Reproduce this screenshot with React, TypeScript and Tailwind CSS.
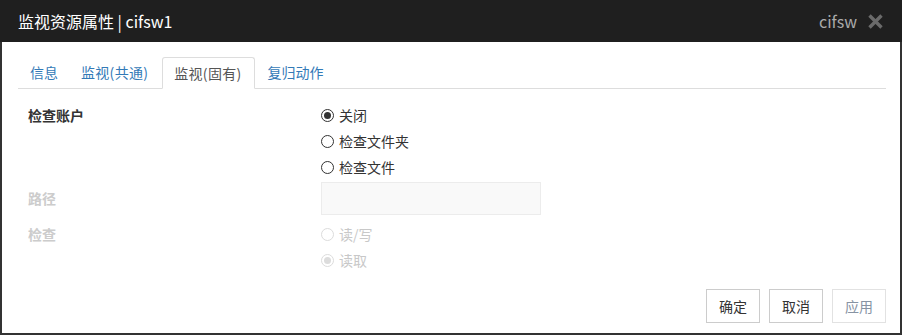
import React from "react";

function Radio({ checked, disabled, label }: { checked?: boolean; disabled?: boolean; label: string }) {
  const border = disabled ? "border-[#dcdcdc]" : "border-[#333]";
  const dot = disabled ? "bg-[#dcdcdc]" : "bg-[#333]";
  return (
    <div className="flex items-center h-[26px]">
      <span className={`w-[13px] h-[13px] rounded-full border ${border} flex items-center justify-center bg-white`}>
        {checked && <span className={`w-[7px] h-[7px] rounded-full ${dot}`} />}
      </span>
      <span className={`ml-[5px] text-[14px] ${disabled ? "text-[#c8c8c8]" : "text-[#333]"}`}>{label}</span>
    </div>
  );
}

export default function App() {
  return (
    <div
      className="w-[904px] h-[336px] bg-white"
      style={{ fontFamily: '"Noto Sans CJK SC", "Microsoft YaHei", sans-serif' }}
    >
      <div className="w-[902px] h-[335px] flex flex-col border-x-2 border-b-2 border-[#333]">
        <div className="h-[42px] -mx-[2px] bg-[#1f1f1f] flex items-center pl-[18px] pr-[19px]">
          <div className="text-white text-[16px] leading-none">监视资源属性 | cifsw1</div>
          <div className="ml-auto flex items-center">
            <span className="text-[#aaaaaa] text-[16px] leading-none">cifsw</span>
            <svg className="ml-[11px]" width="15" height="15" viewBox="0 0 15 15">
              <path d="M1.5 1.5 L13.5 13.5 M13.5 1.5 L1.5 13.5" stroke="#6a6a6a" strokeWidth="3.4" strokeLinecap="butt" />
            </svg>
          </div>
        </div>
        <div className="pl-[16px] pr-[14px] pt-[15px]">
          <div className="flex border-b border-[#dddddd] h-[32px]">
            <div className="px-[11px] h-[31px] flex items-center text-[14px] text-[#337ab7] border border-transparent">信息</div>
            <div className="pl-[10px] pr-[13px] h-[31px] flex items-center text-[14px] text-[#337ab7] border border-transparent tracking-[0.3px]">监视(共通)</div>
            <div className="pl-[11px] pr-[12px] h-[32px] flex items-center text-[14px] text-[#555] border border-[#dddddd] border-b-white bg-white rounded-t-[3px] tracking-[0.3px]">监视(固有)</div>
            <div className="px-[12px] h-[31px] flex items-center text-[14px] text-[#337ab7] border border-transparent">复归动作</div>
          </div>
        </div>
        <div className="pl-[26px] pt-[13px] grid grid-cols-[293px_1fr] text-[14px]">
          <div className="h-[26px] flex items-center font-bold text-[#333]">检查账户</div>
          <div>
            <Radio checked label="关闭" />
            <Radio label="检查文件夹" />
            <div className="h-[27px] flex items-center">
              <Radio label="检查文件" />
            </div>
          </div>
          <div className="h-[33px] mt-[1px] flex items-center font-bold text-[#cccccc]">路径</div>
          <div className="h-[33px] mt-[1px] w-[220px] border border-[#ececec] bg-[#f9f9f9]" />
          <div className="h-[26px] mt-[6px] flex items-center font-bold text-[#cccccc]">检查</div>
          <div className="mt-[6px]">
            <Radio disabled label="读/写" />
            <Radio disabled checked label="读取" />
          </div>
        </div>
        <div className="flex justify-end gap-[9px] pr-[14px] mt-[16px]">
          <div className="w-[54px] h-[34px] border border-[#cccccc] flex items-center justify-center text-[14px] text-[#333]">确定</div>
          <div className="w-[54px] h-[34px] border border-[#cccccc] flex items-center justify-center text-[14px] text-[#333]">取消</div>
          <div className="w-[54px] h-[34px] border border-[#e2e2e2] flex items-center justify-center text-[14px] text-[#8793a3]">应用</div>
        </div>
      </div>
    </div>
  );
}
